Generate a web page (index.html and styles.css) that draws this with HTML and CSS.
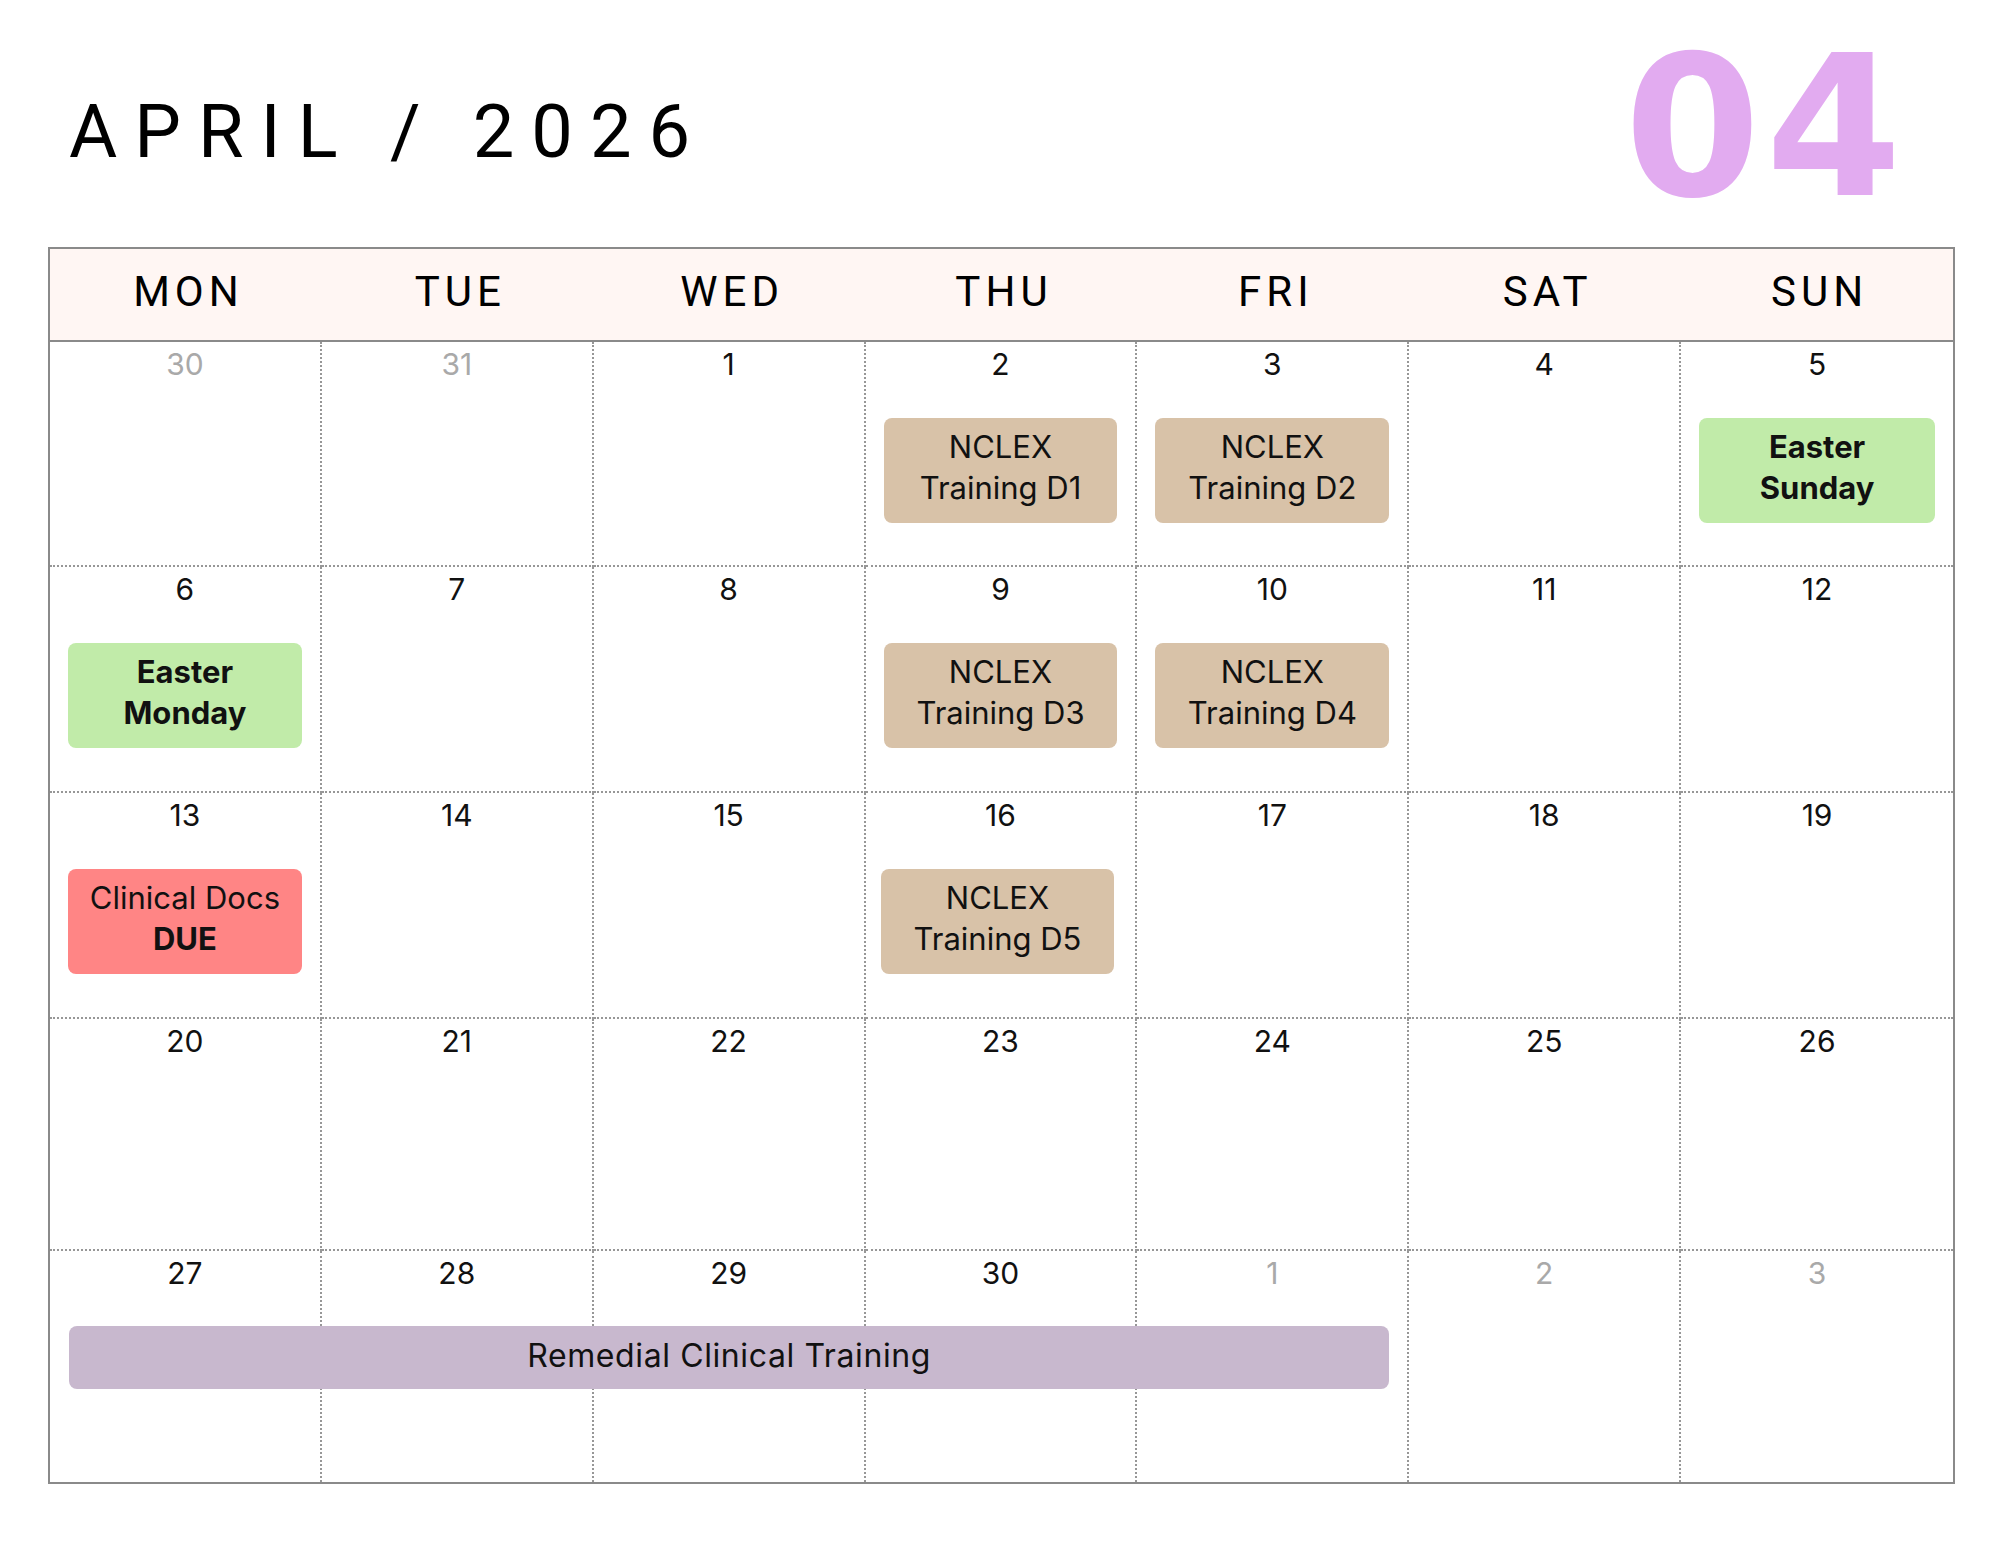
FILE: index.html
```html
<!DOCTYPE html>
<html lang="en">
<head>
<meta charset="utf-8">
<title>April 2026</title>
<link rel="stylesheet" href="styles.css">
</head>
<body>
<div class="page">
  <header class="top">
    <h1 class="title">APRIL / 2026</h1>
    <div class="month-num">04</div>
  </header>
  <div class="cal">
    <div class="dow-row">
      <div class="dow">MON</div>
      <div class="dow">TUE</div>
      <div class="dow">WED</div>
      <div class="dow">THU</div>
      <div class="dow">FRI</div>
      <div class="dow">SAT</div>
      <div class="dow">SUN</div>
    </div>
    <div class="grid">
      <div class="cell"><div class="num muted">30</div></div>
      <div class="cell"><div class="num muted">31</div></div>
      <div class="cell"><div class="num">1</div></div>
      <div class="cell"><div class="num">2</div><div class="event tan"><span>NCLEX<br>Training D1</span></div></div>
      <div class="cell"><div class="num">3</div><div class="event tan"><span>NCLEX<br>Training D2</span></div></div>
      <div class="cell"><div class="num">4</div></div>
      <div class="cell"><div class="num">5</div><div class="event green bold"><span>Easter<br>Sunday</span></div></div>

      <div class="cell"><div class="num">6</div><div class="event green bold"><span>Easter<br>Monday</span></div></div>
      <div class="cell"><div class="num">7</div></div>
      <div class="cell"><div class="num">8</div></div>
      <div class="cell"><div class="num">9</div><div class="event tan"><span>NCLEX<br>Training D3</span></div></div>
      <div class="cell"><div class="num">10</div><div class="event tan"><span>NCLEX<br>Training D4</span></div></div>
      <div class="cell"><div class="num">11</div></div>
      <div class="cell"><div class="num">12</div></div>

      <div class="cell"><div class="num">13</div><div class="event red"><span>Clinical Docs<br><b>DUE</b></span></div></div>
      <div class="cell"><div class="num">14</div></div>
      <div class="cell"><div class="num">15</div></div>
      <div class="cell"><div class="num">16</div><div class="event tan shift"><span>NCLEX<br>Training D5</span></div></div>
      <div class="cell"><div class="num">17</div></div>
      <div class="cell"><div class="num">18</div></div>
      <div class="cell"><div class="num">19</div></div>

      <div class="cell"><div class="num">20</div></div>
      <div class="cell"><div class="num">21</div></div>
      <div class="cell"><div class="num">22</div></div>
      <div class="cell"><div class="num">23</div></div>
      <div class="cell"><div class="num">24</div></div>
      <div class="cell"><div class="num">25</div></div>
      <div class="cell"><div class="num">26</div></div>

      <div class="cell last"><div class="num">27</div></div>
      <div class="cell last"><div class="num">28</div></div>
      <div class="cell last"><div class="num">29</div></div>
      <div class="cell last"><div class="num">30</div></div>
      <div class="cell last"><div class="num muted">1</div></div>
      <div class="cell last"><div class="num muted">2</div></div>
      <div class="cell last"><div class="num muted">3</div></div>

      <div class="span-event">Remedial Clinical Training</div>
    </div>
  </div>
</div>
</body>
</html>
```

FILE: styles.css
```css
html, body {
  margin: 0;
  padding: 0;
  background: #ffffff;
}

.page {
  width: 2000px;
  box-sizing: border-box;
  padding: 0 45px 0 48px;
  font-family: "Inter", "Liberation Sans", sans-serif;
  color: #111111;
}

.top {
  height: 247px;
  display: flex;
  justify-content: space-between;
  align-items: flex-start;
}

.title {
  margin: 95px 0 0 21px;
  font-family: "Roboto", "Liberation Sans", sans-serif;
  font-weight: 400;
  font-size: 74px;
  line-height: 74px;
  letter-spacing: 17px;
  color: #000000;
}

.month-num {
  margin: 29px 48px 0 0;
  font-family: "DejaVu Sans", sans-serif;
  font-weight: 700;
  font-size: 196px;
  line-height: 196px;
  letter-spacing: 5px;
  color: #e2abf0;
}

.cal {
  border: 2px solid #8a8a8a;
}

.dow-row {
  display: grid;
  grid-template-columns: repeat(7, 1fr);
  height: 91px;
  background: #fff6f3;
  border-bottom: 2px solid #8a8a8a;
}

.dow {
  display: flex;
  align-items: center;
  justify-content: center;
  padding: 0 0 6px 5px;
  font-family: "Roboto", "Liberation Sans", sans-serif;
  font-size: 42px;
  letter-spacing: 5px;
  color: #000000;
}

.grid {
  display: grid;
  grid-template-columns: repeat(7, 1fr);
  grid-template-rows: 225px 226px 226px 232px 231px;
}

.cell {
  box-sizing: border-box;
  border-right: 2px dotted #979797;
  border-bottom: 2px dotted #979797;
  padding: 4px 18px 0 18px;
  display: flex;
  flex-direction: column;
  align-items: stretch;
}

.cell:nth-child(7n) {
  border-right: none;
}

.cell.last {
  border-bottom: none;
  grid-row: 5;
}

.cell.last:nth-child(29) { grid-column: 1; }
.cell.last:nth-child(30) { grid-column: 2; }
.cell.last:nth-child(31) { grid-column: 3; }
.cell.last:nth-child(32) { grid-column: 4; }
.cell.last:nth-child(33) { grid-column: 5; }
.cell.last:nth-child(34) { grid-column: 6; }
.cell.last:nth-child(35) { grid-column: 7; }

.num {
  text-align: center;
  font-size: 30px;
  line-height: 36px;
  font-weight: 400;
  color: #111111;
}

.num.muted {
  color: #a9a9a9;
}

.event {
  margin-top: 36px;
  height: 105px;
  box-sizing: border-box;
  padding-bottom: 7px;
  border-radius: 8px;
  display: flex;
  align-items: center;
  justify-content: center;
  text-align: center;
  font-size: 31px;
  line-height: 41px;
  color: #111111;
}

.event.shift {
  margin-left: -3px;
  margin-right: 3px;
}

.event.bold {
  font-weight: 700;
}

.event b {
  font-weight: 700;
}

.tan {
  background: #d8c2a8;
}

.green {
  background: #c1eba9;
}

.red {
  background: #ff8585;
}

.span-event {
  grid-row: 5;
  grid-column: 1 / 6;
  z-index: 1;
  align-self: start;
  margin: 75px 20px 0 19px;
  height: 63px;
  box-sizing: border-box;
  padding-bottom: 4px;
  border-radius: 8px;
  background: #c8b8ce;
  display: flex;
  align-items: center;
  justify-content: center;
  font-size: 32px;
  letter-spacing: 0.6px;
  color: #111111;
}
```
